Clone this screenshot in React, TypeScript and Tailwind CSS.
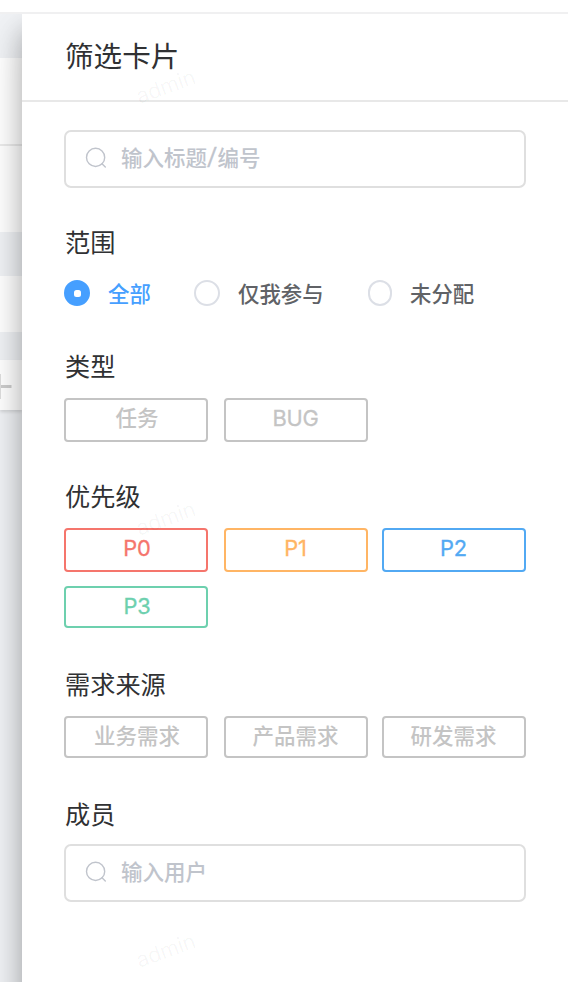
import type { ReactNode } from "react";

function SearchIcon() {
  return (
    <svg className="-mt-[3px]" width="22" height="22" viewBox="0 0 22 22" fill="none" stroke="#c0c4cc" strokeWidth="1.4" strokeLinecap="round">
      <circle cx="10.6" cy="10.4" r="9.1" />
      <path d="M17 16.8l3.3 3.2" />
    </svg>
  );
}

function SearchBox({ children }: { children: ReactNode }) {
  return (
    <div className="flex h-[58px] w-[462px] items-center rounded-[7px] border-2 border-[#dfdfdf] pl-[19px]">
      <SearchIcon />
      <span className="ml-[14px] text-[21.5px] leading-[30px] font-medium text-[#c0c4cc]">{children}</span>
    </div>
  );
}

function Radio({ label, checked = false, width = "w-[26px]" }: { label: string; checked?: boolean; width?: string }) {
  return (
    <div className="flex items-center">
      <span
        className={`flex h-[26px] items-center justify-center rounded-full border-2 ${width} ${
          checked ? "border-[#469fff] bg-[#469fff]" : "border-[#dcdfe6] bg-white"
        }`}
      >
        {checked && <span className="size-[7px] rounded-[2.5px] bg-white" />}
      </span>
      <span className={`ml-[18px] pt-[4px] text-[21.4px] leading-[28px] font-medium ${checked ? "text-[#469fff]" : "text-[#606266]"}`}>
        {label}
      </span>
    </div>
  );
}

function Chip({ children, tone, inset = "pr-px" }: { children: ReactNode; tone: string; inset?: string }) {
  return (
    <div className={`flex w-[144px] items-start justify-center rounded-[4px] border-2 pt-[4px] text-[21.5px] leading-[30px] font-medium ${inset} ${tone}`}>
      {children}
    </div>
  );
}

function Heading({ children }: { children: ReactNode }) {
  return <h2 className="pl-px text-[25.2px] leading-[36px] text-[#303133]">{children}</h2>;
}

function Watermark({ place }: { place: string }) {
  return (
    <span className={`pointer-events-none absolute left-[113px] -rotate-[20deg] font-['Inter'] text-[21.5px] leading-[28px] tracking-[-0.2px] text-black/[0.04] ${place}`}>
      admin
    </span>
  );
}

const gray = "border-[#c4c4c4] text-[#c4c4c4]";

function Latin({ children }: { children: ReactNode }) {
  return (
    <span className="-mt-px font-['Inter'] text-[21.8px] font-normal tracking-[-0.2px] [-webkit-text-stroke:0.3px_currentColor]">
      {children}
    </span>
  );
}

export default function App() {
  return (
    <div className="flex h-[982px] w-[568px] flex-col overflow-hidden bg-white font-['Liberation_Sans','Noto_Sans_CJK_SC',sans-serif]">
      <div className="h-[14px] shrink-0 border-b-2 border-[#f0f0f1]" />
      <div className="flex min-h-0 flex-1 overflow-hidden">
        <div className="flex w-[22px] shrink-0 flex-col bg-[#f0f2f5]">
          <div className="mt-[44px] h-[88px] border-b-2 border-[#ebebeb] bg-white" />
          <div className="h-[86px] bg-white" />
          <div className="mt-[44px] h-[56px] bg-white" />
          <div className="mt-[28px] h-[50px] bg-white shadow-[0_2px_3px_rgba(0,0,0,0.12)]">
            <svg width="22" height="50" viewBox="0 0 22 50">
              <path d="M0 26.5H11.5" stroke="#cdcdcd" strokeWidth="3" />
              <path d="M0 14V39" stroke="#dedede" strokeWidth="2" />
            </svg>
          </div>
        </div>

        <main className="relative h-[1600px] flex-1 bg-white shadow-[0_16px_24px_0_rgba(0,0,0,0.26),0_24px_44px_0_rgba(0,0,0,0.12)]">
          <header className="flex h-[88px] items-center border-b-2 border-[#e8e8e8] pl-[43px]">
            <h1 className="text-[28.6px] leading-[40px] text-[#303133]">筛选卡片</h1>
          </header>

          <div className="flex flex-col pt-[28px] pl-[42px]">
            <SearchBox>
              输入标题<span className="inline-block w-[10.5px] text-center font-['Roboto'] text-[25px] leading-[20px] font-normal [-webkit-text-stroke:0.3px_currentColor]">/</span>编号
            </SearchBox>

            <section className="mt-[37px]">
              <Heading>范围</Heading>
              <div className="mt-[18px] flex h-[28px] items-center">
                <div className="w-[130px]">
                  <Radio label="全部" checked />
                </div>
                <div className="w-[174px]">
                  <Radio label="仅我参与" />
                </div>
                <Radio label="未分配" width="w-[24px]" />
              </div>
            </section>

            <section className="mt-[42px]">
              <Heading>类型</Heading>
              <div className="mt-[13px] grid h-[44px] grid-cols-[160px_158px_144px]">
                <Chip tone={gray} inset="pl-[2px]">任务</Chip>
                <Chip tone={gray}><Latin>BUG</Latin></Chip>
              </div>
            </section>

            <section className="mt-[37px]">
              <Heading>优先级</Heading>
              <div className="mt-[13px] grid grid-cols-[160px_158px_144px] grid-rows-[44px_42px] gap-y-[14px]">
                <Chip tone="border-[#f5756c] text-[#f5756c]" inset="pl-[2px]"><Latin>P0</Latin></Chip>
                <Chip tone="border-[#ffb564] text-[#ffb564]"><Latin>P1</Latin></Chip>
                <Chip tone="border-[#52a9f3] text-[#52a9f3]"><Latin>P2</Latin></Chip>
                <Chip tone="border-[#6dd0ae] text-[#6dd0ae]" inset="pl-[2px]"><Latin>P3</Latin></Chip>
              </div>
            </section>

            <section className="mt-[39px]">
              <Heading>需求来源</Heading>
              <div className="mt-[13px] grid h-[42px] grid-cols-[160px_158px_144px]">
                <Chip tone={gray} inset="pl-[2px]">业务需求</Chip>
                <Chip tone={gray}>产品需求</Chip>
                <Chip tone={gray}>研发需求</Chip>
              </div>
            </section>

            <section className="mt-[39px]">
              <Heading>成员</Heading>
              <div className="mt-[11px]">
                <SearchBox>输入用户</SearchBox>
              </div>
            </section>
          </div>

          <Watermark place="top-[58px]" />
          <Watermark place="top-[490px]" />
          <Watermark place="top-[922px]" />
        </main>
      </div>
    </div>
  );
}
